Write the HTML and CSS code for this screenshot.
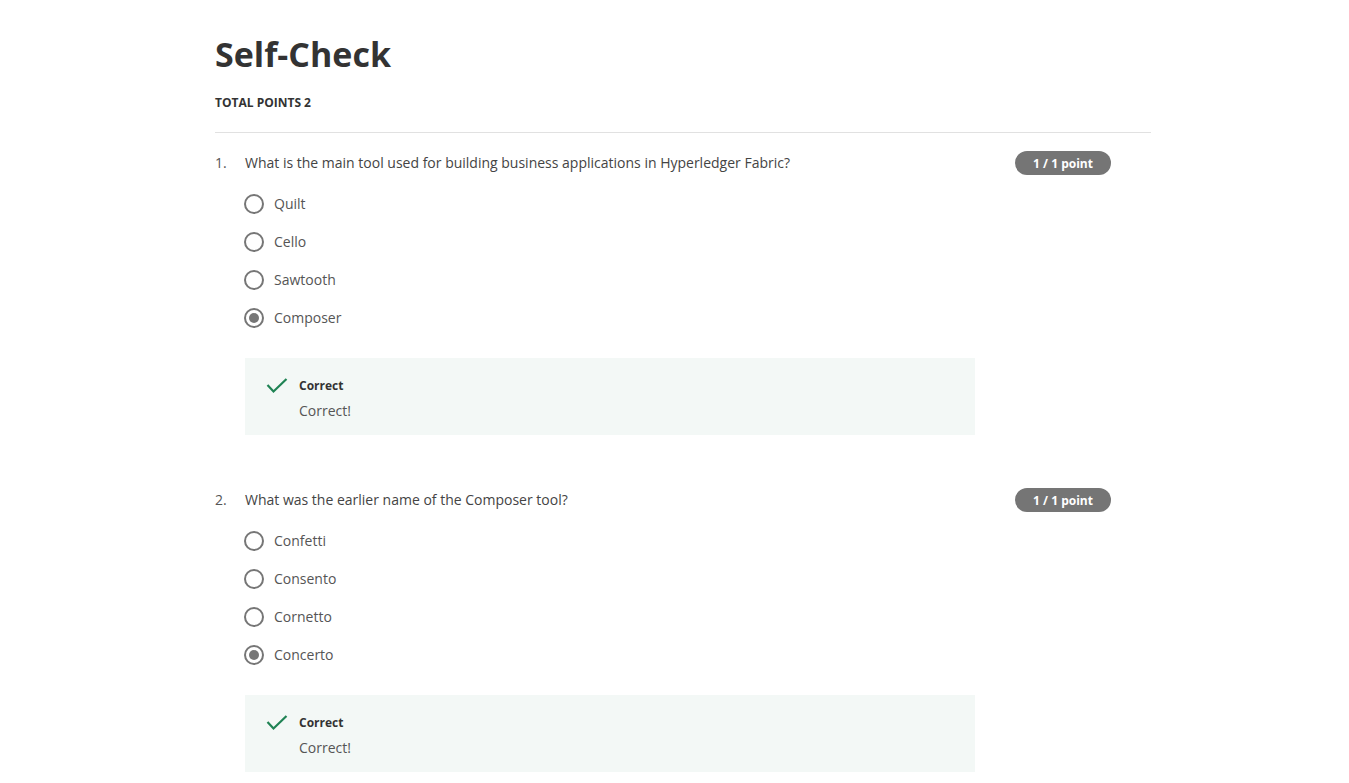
FILE: index.html
```html
<!DOCTYPE html>
<html lang="en">
<head>
<meta charset="utf-8">
<title>Self-Check</title>
<link rel="stylesheet" href="styles.css">
</head>
<body>
<div class="page">
  <h1 class="title">Self-Check</h1>
  <div class="total">TOTAL POINTS 2</div>
  <div class="divider"></div>

  <div class="question">
    <div class="qnum">1.</div>
    <div class="qmain">
      <div class="qtext">What is the main tool used for building business applications in Hyperledger Fabric?</div>
      <div class="options">
        <div class="option"><span class="radio"></span><span class="label">Quilt</span></div>
        <div class="option"><span class="radio"></span><span class="label">Cello</span></div>
        <div class="option"><span class="radio"></span><span class="label">Sawtooth</span></div>
        <div class="option"><span class="radio checked"></span><span class="label">Composer</span></div>
      </div>
      <div class="feedback">
        <svg class="check" width="22" height="16" viewBox="0 0 22 16"><polyline points="1.5,7 7.5,13.5 20.5,1" fill="none" stroke="#1f8354" stroke-width="2.2"/></svg>
        <div class="fbtext">
          <div class="fbtitle">Correct</div>
          <div class="fbmsg">Correct!</div>
        </div>
      </div>
    </div>
    <div class="qside"><span class="badge">1 / 1 point</span></div>
  </div>

  <div class="question">
    <div class="qnum">2.</div>
    <div class="qmain">
      <div class="qtext">What was the earlier name of the Composer tool?</div>
      <div class="options">
        <div class="option"><span class="radio"></span><span class="label">Confetti</span></div>
        <div class="option"><span class="radio"></span><span class="label">Consento</span></div>
        <div class="option"><span class="radio"></span><span class="label">Cornetto</span></div>
        <div class="option"><span class="radio checked"></span><span class="label">Concerto</span></div>
      </div>
      <div class="feedback">
        <svg class="check" width="22" height="16" viewBox="0 0 22 16"><polyline points="1.5,7 7.5,13.5 20.5,1" fill="none" stroke="#1f8354" stroke-width="2.2"/></svg>
        <div class="fbtext">
          <div class="fbtitle">Correct</div>
          <div class="fbmsg">Correct!</div>
        </div>
      </div>
    </div>
    <div class="qside"><span class="badge">1 / 1 point</span></div>
  </div>
</div>
</body>
</html>
```

FILE: styles.css
```css
html, body {
  margin: 0;
  padding: 0;
  background: #ffffff;
}
body {
  font-family: "Open Sans", "Liberation Sans", sans-serif;
  color: #444444;
}
.page {
  width: 936px;
  margin-left: 215px;
  padding-top: 30px;
}
.title {
  margin: 0;
  font-size: 34px;
  line-height: 48px;
  font-weight: 700;
  color: #333333;
}
.total {
  margin-top: 17px;
  font-size: 12px;
  line-height: 16px;
  font-weight: 700;
  color: #333333;
}
.divider {
  margin-top: 21px;
  border-top: 1px solid #e1e1e1;
}
.question {
  display: flex;
  margin-top: 18px;
  margin-bottom: 53px;
}
.qnum {
  width: 30px;
  flex: none;
  font-size: 14px;
  line-height: 24px;
  color: #555555;
}
.qmain {
  width: 730px;
  flex: none;
}
.qtext {
  font-size: 14px;
  line-height: 24px;
  color: #444444;
}
.options {
  margin-top: 10px;
  margin-left: -1px;
}
.option {
  display: flex;
  align-items: center;
  height: 38px;
}
.radio {
  box-sizing: border-box;
  width: 20px;
  height: 20px;
  border: 2px solid #767676;
  border-radius: 50%;
  display: flex;
  align-items: center;
  justify-content: center;
  flex: none;
}
.radio.checked::after {
  content: "";
  width: 10px;
  height: 10px;
  border-radius: 50%;
  background: #767676;
}
.label {
  margin-left: 10px;
  font-size: 14px;
  line-height: 20px;
  color: #555555;
}
.feedback {
  margin-top: 21px;
  background: #f3f8f6;
  display: flex;
  align-items: flex-start;
  padding: 20px 0 14px 21px;
}
.check {
  flex: none;
  margin-top: 0;
}
.fbtext {
  margin-left: 11px;
}
.fbtitle {
  font-size: 12px;
  line-height: 16px;
  font-weight: 700;
  color: #333333;
}
.fbmsg {
  margin-top: 7px;
  font-size: 14px;
  line-height: 20px;
  color: #555555;
}
.qside {
  margin-left: 40px;
  flex: none;
  display: flex;
  align-items: flex-start;
}
.badge {
  display: flex;
  align-items: center;
  justify-content: center;
  width: 96px;
  height: 24px;
  border-radius: 12px;
  background: #757575;
  color: #ffffff;
  font-size: 12px;
  font-weight: 700;
}
```
